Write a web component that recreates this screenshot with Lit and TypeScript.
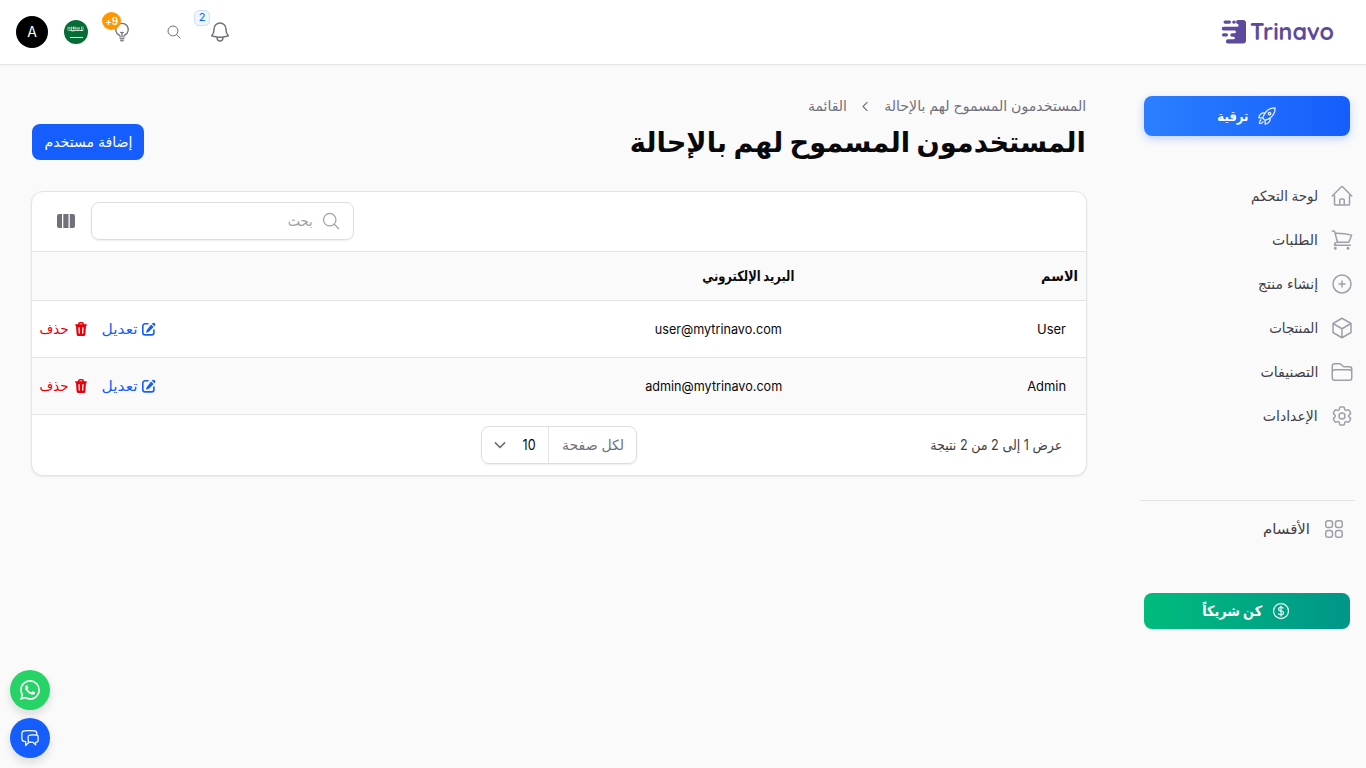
import { LitElement, html, css } from "lit";
import { customElement, property } from "lit/decorators.js";

/** A single line of text condensed or widened to an exact advance width. */
@customElement("fit-text")
class FitText extends LitElement {
  @property({ type: Number }) w = 0;
  static styles = css`
    :host { display: inline-block; white-space: nowrap; direction: rtl; flex: none; }
    .t { display: inline-block; transform-origin: right center; }
  `;
  render() {
    return html`<span class="t"><slot></slot></span>`;
  }
  firstUpdated() {
    this.style.width = this.w + "px";
    const t = this.renderRoot.querySelector(".t") as HTMLElement;
    const fit = () => {
      t.style.transform = "none";
      const n = t.getBoundingClientRect().width;
      if (n) t.style.transform = `scaleX(${this.w / n})`;
    };
    fit();
    document.fonts.ready.then(fit);
  }
}

const line = (d: string, size = 24, sw = 1.5) => html`<svg width=${size} height=${size} viewBox="0 0 24 24" fill="none" stroke="currentColor" stroke-width=${sw} stroke-linecap="round" stroke-linejoin="round"><path d=${d}></path></svg>`;

const I = {
  home: "m2.25 12 8.954-8.955c.44-.439 1.152-.439 1.591 0L21.75 12M4.5 9.75v10.125c0 .621.504 1.125 1.125 1.125H9.75v-4.875c0-.621.504-1.125 1.125-1.125h2.25c.621 0 1.125.504 1.125 1.125V21h4.125c.621 0 1.125-.504 1.125-1.125V9.75M8.25 21h8.25",
  cart: "M2.25 3h1.386c.51 0 .955.343 1.087.835l.383 1.437M7.5 14.25a3 3 0 0 0-3 3h15.75m-12.75-3h11.218c1.121-2.3 2.1-4.684 2.924-7.138a60.114 60.114 0 0 0-16.536-1.84M7.5 14.25 5.106 5.272M6 20.25a.75.75 0 1 1-1.5 0 .75.75 0 0 1 1.5 0Zm12.75 0a.75.75 0 1 1-1.5 0 .75.75 0 0 1 1.5 0Z",
  plus: "M12 9v6m3-3H9m12 0a9 9 0 1 1-18 0 9 9 0 0 1 18 0Z",
  cube: "m21 7.5-9-5.25L3 7.5m18 0-9 5.25m9-5.25v9l-9 5.25M3 7.5l9 5.25M3 7.5v9l9 5.25m0-9v9",
  folder: "M2.25 12.75V12A2.25 2.25 0 0 1 4.5 9.75h15A2.25 2.25 0 0 1 21.75 12v.75m-8.69-6.44-2.12-2.12a1.5 1.5 0 0 0-1.061-.44H4.5A2.25 2.25 0 0 0 2.25 6v12a2.25 2.25 0 0 0 2.25 2.25h15A2.25 2.25 0 0 0 21.75 18V9a2.25 2.25 0 0 0-2.25-2.25h-5.379a1.5 1.5 0 0 1-1.06-.44Z",
  cog: "M9.594 3.94c.09-.542.56-.94 1.11-.94h2.593c.55 0 1.02.398 1.11.94l.213 1.281c.063.374.313.686.645.87.074.04.147.083.22.127.325.196.72.257 1.075.124l1.217-.456a1.125 1.125 0 0 1 1.37.49l1.296 2.247a1.125 1.125 0 0 1-.26 1.431l-1.003.827c-.293.241-.438.613-.43.992a7.723 7.723 0 0 1 0 .255c-.008.378.137.75.43.991l1.004.827c.424.35.534.955.26 1.43l-1.298 2.247a1.125 1.125 0 0 1-1.369.491l-1.217-.456c-.355-.133-.75-.072-1.076.124a6.47 6.47 0 0 1-.22.128c-.331.183-.581.495-.644.869l-.213 1.281c-.09.543-.56.94-1.11.94h-2.594c-.55 0-1.019-.398-1.11-.94l-.213-1.281c-.062-.374-.312-.686-.644-.87a6.52 6.52 0 0 1-.22-.127c-.325-.196-.72-.257-1.076-.124l-1.217.456a1.125 1.125 0 0 1-1.369-.49l-1.297-2.247a1.125 1.125 0 0 1 .26-1.431l1.004-.827c.292-.24.437-.613.43-.991a6.932 6.932 0 0 1 0-.255c.007-.38-.138-.751-.43-.992l-1.004-.827a1.125 1.125 0 0 1-.26-1.43l1.297-2.247a1.125 1.125 0 0 1 1.37-.491l1.216.456c.356.133.751.072 1.076-.124.072-.044.146-.086.22-.128.332-.183.582-.495.644-.869l.214-1.28ZM15 12a3 3 0 1 1-6 0 3 3 0 0 1 6 0Z",
  grid: "M3.75 6A2.25 2.25 0 0 1 6 3.75h2.25A2.25 2.25 0 0 1 10.5 6v2.25a2.25 2.25 0 0 1-2.25 2.25H6a2.25 2.25 0 0 1-2.25-2.25V6ZM3.75 15.75A2.25 2.25 0 0 1 6 13.5h2.25a2.25 2.25 0 0 1 2.25 2.25V18a2.25 2.25 0 0 1-2.25 2.25H6A2.25 2.25 0 0 1 3.75 18v-2.25ZM13.5 6a2.25 2.25 0 0 1 2.25-2.25H18A2.25 2.25 0 0 1 20.25 6v2.25A2.25 2.25 0 0 1 18 10.5h-2.25a2.25 2.25 0 0 1-2.25-2.25V6ZM13.5 15.75a2.25 2.25 0 0 1 2.25-2.25H18a2.25 2.25 0 0 1 2.25 2.25V18A2.25 2.25 0 0 1 18 20.25h-2.25A2.25 2.25 0 0 1 13.5 18v-2.25Z",
  bell: "M14.857 17.082a23.848 23.848 0 0 0 5.454-1.31A8.967 8.967 0 0 1 18 9.75V9A6 6 0 0 0 6 9v.75a8.967 8.967 0 0 1-2.312 6.022c1.733.64 3.56 1.085 5.455 1.31m5.714 0a24.255 24.255 0 0 1-5.714 0m5.714 0a3 3 0 1 1-5.714 0",
  bulb: "M12 18v-5.25m0 0a6.01 6.01 0 0 0 1.5-.189m-1.5.189a6.01 6.01 0 0 1-1.5-.189m3.75 7.478a12.06 12.06 0 0 1-4.5 0m3.75 2.383a14.406 14.406 0 0 1-3 0M14.25 18v-.192c0-.983.658-1.823 1.508-2.316a7.5 7.5 0 1 0-7.517 0c.85.493 1.509 1.333 1.509 2.316V18",
  search: "m21 21-5.197-5.197m0 0A7.5 7.5 0 1 0 5.196 5.196a7.5 7.5 0 0 0 10.607 10.607Z",
  rocket: "M15.59 14.37a6 6 0 0 1-5.84 7.38v-4.8m5.84-2.58a14.98 14.98 0 0 0 6.16-12.12A14.98 14.98 0 0 0 9.631 8.41m5.96 5.96a14.926 14.926 0 0 1-5.841 2.58m-.119-8.54a6 6 0 0 0-7.381 5.84h4.8m2.581-5.84a14.927 14.927 0 0 0-2.58 5.84m2.699 2.7c-.103.021-.207.041-.311.06a15.09 15.09 0 0 1-2.448-2.448 14.9 14.9 0 0 1 .06-.312m-2.24 2.39a4.493 4.493 0 0 0-1.757 4.306 4.493 4.493 0 0 0 4.306-1.758M16.5 9a1.5 1.5 0 1 1-3 0 1.5 1.5 0 0 1 3 0Z",
  dollar: "M12 6v12m-3-2.818.879.659c1.171.879 3.07.879 4.242 0 1.172-.879 1.172-2.303 0-3.182C13.536 12.219 12.768 12 12 12c-.725 0-1.45-.22-2.003-.659-1.106-.879-1.106-2.303 0-3.182s2.9-.879 4.006 0l.415.33M21 12a9 9 0 1 1-18 0 9 9 0 0 1 18 0Z",
  chat: "M20.25 8.511c.884.284 1.5 1.128 1.5 2.097v4.286c0 1.136-.847 2.1-1.98 2.193-.34.027-.68.052-1.02.072v3.091l-3-3c-1.354 0-2.694-.055-4.02-.163a2.115 2.115 0 0 1-.825-.242m9.345-8.334a2.126 2.126 0 0 0-.476-.095 48.64 48.64 0 0 0-8.048 0c-1.131.094-1.976 1.057-1.976 2.192v4.286c0 .837.46 1.58 1.155 1.951m9.345-8.334V6.637c0-1.621-1.152-3.026-2.76-3.235A48.455 48.455 0 0 0 11.25 3c-2.115 0-4.198.137-6.24.402-1.608.209-2.76 1.614-2.76 3.235v6.226c0 1.621 1.152 3.026 2.76 3.235.577.075 1.157.14 1.74.194V21l4.155-4.155",
};

const whatsapp = html`<svg width="20" height="20" viewBox="0 0 24 24" fill="#fff"><path d="M17.472 14.382c-.297-.149-1.758-.867-2.03-.967-.273-.099-.471-.148-.67.15-.197.297-.767.966-.94 1.164-.173.199-.347.223-.644.075-.297-.15-1.255-.463-2.39-1.475-.883-.788-1.48-1.761-1.653-2.059-.173-.297-.018-.458.13-.606.134-.133.298-.347.446-.52.149-.174.198-.298.298-.497.099-.198.05-.371-.025-.52-.075-.149-.669-1.612-.916-2.207-.242-.579-.487-.5-.669-.51-.173-.008-.371-.01-.57-.01-.198 0-.52.074-.792.372-.272.297-1.04 1.016-1.04 2.479 0 1.462 1.065 2.875 1.213 3.074.149.198 2.096 3.2 5.077 4.487.709.306 1.262.489 1.694.625.712.227 1.36.195 1.871.118.571-.085 1.758-.719 2.006-1.413.248-.694.248-1.289.173-1.413-.074-.124-.272-.198-.57-.347m-5.421 7.403h-.004a9.87 9.87 0 01-5.031-1.378l-.361-.214-3.741.982.998-3.648-.235-.374a9.86 9.86 0 01-1.51-5.26c.001-5.45 4.436-9.884 9.888-9.884 2.64 0 5.122 1.03 6.988 2.898a9.825 9.825 0 012.893 6.994c-.003 5.45-4.437 9.884-9.885 9.884m8.413-18.297A11.815 11.815 0 0012.05 0C5.495 0 .16 5.335.157 11.892c0 2.096.547 4.142 1.588 5.945L.057 24l6.305-1.654a11.882 11.882 0 005.683 1.448h.005c6.554 0 11.89-5.335 11.893-11.893a11.821 11.821 0 00-3.48-8.413z"></path></svg>`;

const pencil = html`<svg width="16" height="16" viewBox="0 0 16 16" fill="none" stroke="#155dfc" stroke-width="1.6" stroke-linecap="round"><path d="M7 2.8H4A2.200 2.200 0 0 0 1.800 5v6.700A2.200 2.200 0 0 0 4 13.900h6.700a2.200 2.200 0 0 0 2.200-2.200V9"></path><path fill="#155dfc" stroke="none" d="M11.300 2.300a1.750 1.750 0 0 1 2.500 2.500l-.5.500-2.500-2.500zM10.100 3.500l2.500 2.500-4.200 4.200a3 3 0 0 1-1.300.8l-2.200.7.700-2.200a3 3 0 0 1 .8-1.300z"></path></svg>`;

const trash = html`<svg width="16" height="16" viewBox="0 0 16 16" fill="#e7000b" fill-rule="evenodd"><path d="M5 3.250V3a2 2 0 0 1 2-2h2a2 2 0 0 1 2 2v.25h2.250a.75.750 0 0 1 0 1.500H13l-.6 8.400A2 2 0 0 1 10.400 15H5.600a2 2 0 0 1-2-1.850L3 4.750h-.250a.75.750 0 0 1 0-1.500zM7 2.500a.5.500 0 0 0-.5.500v.25h3V3a.5.500 0 0 0-.5-.500zM6 6a.6.600 0 0 0-.6.650l.3 5.500a.6.600 0 0 0 1.250-.050L6.700 6.600A.6.600 0 0 0 6 6zm4 0a.6.600 0 0 0-.7.600l-.25 5.500a.6.600 0 0 0 1.250.050l.3-5.500A.6.600 0 0 0 10 6z"></path></svg>`;

const nav: [string, string, number][] = [
  [I.home, "لوحة التحكم", 67],
  [I.cart, "الطلبات", 46],
  [I.plus, "إنشاء منتج", 60],
  [I.cube, "المنتجات", 49],
  [I.folder, "التصنيفات", 58],
  [I.cog, "الإعدادات", 55],
];

const rows: [string, number, string, number][] = [
  ["User", 29, "user@mytrinavo.com", 127],
  ["Admin", 39, "admin@mytrinavo.com", 137],
];

@customElement("app-root")
class AppRoot extends LitElement {
  static styles = css`
    * { box-sizing: border-box; }
    :host { display: block; position: relative; width: 1366px; height: 768px; overflow: hidden; background: #fafafa; direction: rtl; color: #09090b; font: 14px/20px Inter, "DejaVu Sans", sans-serif; }
    svg { display: block; flex: none; }
    header { height: 65px; background: #fff; border-bottom: 1px solid #e4e4e7; box-shadow: 0 1px 2px #0000000a; display: flex; align-items: center; justify-content: space-between; padding: 0 32px 1px 16px; }
    .brand { font: 700 23px Quicksand, Lato, sans-serif; fill: #5d4a9e; }
    .tools { display: flex; align-items: center; color: #71717b; direction: ltr; }
    .avatar { width: 32px; height: 32px; border-radius: 50%; background: #000; color: #fff; display: flex; align-items: center; justify-content: center; font-size: 14px; margin-right: 16px; }
    .tool { position: relative; }
    .bulb { margin-left: 24px; }
    .find { margin-left: 34px; }
    .bell { margin-left: 26px; }
    .badge { position: absolute; display: flex; align-items: center; justify-content: center; line-height: 1; }
    .nine { left: -10px; top: -10px; width: 19px; height: 18px; border-radius: 50%; background: #ff9800; color: #fff; font-weight: 600; font-size: 10px; letter-spacing: -.4px; }
    .two { left: -14px; top: -10px; width: 16px; height: 16px; border-radius: 5px; background: #eff6ff; border: 1px solid #cddffc; color: #155dfc; font-size: 11px; }
    .body { display: flex; height: 703px; }
    aside { width: 248px; padding: 31px 16px 0 16px; }
    .cta { width: 206px; height: 40px; border-radius: 8px; display: flex; align-items: center; justify-content: center; gap: 9px; color: #fff; font-weight: 700; }
    .up { background: linear-gradient(to right, #2b7fff, #155dfc); box-shadow: 0 3px 8px #155dfc40; }
    .up svg, .partner svg { opacity: .9; }
    .partner { height: 36px; background: linear-gradient(to right, #00bc7d, #009689); margin-top: 42px; padding-right: 1px; }
    nav { margin: 38px -4px 0 0; }
    .item { height: 44px; display: flex; align-items: center; gap: 12px; color: #3f3f46; }
    .item svg { color: #9f9fa9; }
    .group { border-top: 1px solid #e4e4e7; width: 215px; margin: 62px -5px 0 0; padding: 6px 9px 0 0; }
    main { width: 1054px; margin-right: 32px; padding-top: 31px; }
    .crumbs { display: flex; align-items: center; height: 20px; color: #71717b; gap: 11px; }
    .title { display: flex; justify-content: space-between; align-items: center; height: 36px; margin-top: 8px; }
    h1 { margin: 0; font-size: 28px; line-height: 36px; font-weight: 700; }
    .add { width: 112px; height: 36px; border-radius: 8px; background: #155dfc; color: #fff; display: flex; align-items: center; justify-content: center; }
    .card { margin: 31px -1px 0; width: 1056px; height: 285px; background: #fff; border: 1px solid #e4e4e7; border-radius: 12px; box-shadow: 0 1px 2px #00000014; overflow: hidden; }
    .toolbar { height: 59px; display: flex; direction: ltr; align-items: center; padding: 0 0 2px 24px; gap: 15px; }
    .field { direction: rtl; width: 263px; height: 38px; border: 1px solid #dedee1; border-radius: 8px; box-shadow: 0 1px 2px #00000012; display: flex; align-items: center; gap: 8px; padding: 0 12px; color: #9f9fa9; }
    .row { display: grid; grid-template-columns: 304px 1fr 132px; height: 57px; border-top: 1px solid #e4e4e7; align-items: center; }
    .row.head { background: #fafafa; height: 49px; font-weight: 700; grid-template-columns: 284px 1fr; padding-right: 8px; }
    .row.alt { background: #fafafa; }
    .latin { font-size: 13px; }
    .name { padding-right: 20px; }
    .actions { display: flex; width: 132px; align-items: center; justify-content: flex-end; padding-left: 8px; }
    .edit { color: #155dfc; margin-right: 4px; }
    .del { color: #e7000b; margin-right: 4px; }
    .trash { margin-right: 12px; }
    .foot { display: flex; align-items: center; height: 60px; border-top: 1px solid #e4e4e7; padding-right: 24px; color: #3f3f46; }
    .per { display: flex; align-items: center; width: 156px; height: 38px; margin-right: 293px; border: 1px solid #dedee1; border-radius: 8px; box-shadow: 0 1px 2px #00000012; color: #71717b; }
    .lbl { height: 36px; width: 88px; flex: none; display: flex; align-items: center; padding-right: 12px; border-left: 1px solid #e4e4e7; }
    .num { color: #09090b; margin: 0 12px 0 13px; }
    .fab { position: absolute; left: 10px; width: 40px; height: 40px; border-radius: 50%; display: flex; align-items: center; justify-content: center; color: #fff; box-shadow: 0 5px 10px #0000001f; }
    .wa { top: 670px; background: #25d366; }
    .ch { top: 718px; background: #155dfc; }
  `;

  render() {
    return html`
      <header>
        <svg width="114" height="32" viewBox="0 0 114 32">
          <g fill="#5d4a9e"><path d="M18 4h5a3 3 0 0 1 3 3v17.500a3 3 0 0 1-3 3H8a2.100 2.100 0 0 1 0-4.200h5.500a1.300 1.300 0 0 0 0-2.600H12a1.700 1.700 0 0 1 0-3.400h2.500a1.400 1.400 0 0 0 0-2.800H3.600a1.900 1.900 0 0 1 0-3.800H17a1.300 1.300 0 0 0 .5-2.600 2.100 2.100 0 0 1 .5-4.100z"></path>
          <rect x="3.500" y="4.500" width="7.500" height="3.200" rx="1.600"></rect><rect x="12.200" y="4.500" width="3.600" height="3.200" rx="1.600"></rect><rect x="2" y="17.300" width="6" height="3.200" rx="1.600"></rect></g>
          <text class="brand" direction="ltr" x="30" y="24" textLength="84" lengthAdjust="spacingAndGlyphs">Trinavo</text>
        </svg>
        <div class="tools">
          <div class="avatar">A</div>
          <svg width="24" height="24" viewBox="0 0 24 24"><circle cx="12" cy="12" r="12" fill="#046c35"></circle><path d="M4 6.500v4.500m2-4v3m1.500-3.500v4.500h3M11 6.500v4.500m2-3v2.500h2V7.500m1 3h3V6.500M4.500 8h2M8 8h8m-11 2.500h14M17.500 6.500v4.500M9.500 6.500v3" stroke="#fff" stroke-width=".8" opacity=".75" fill="none"></path><path d="M6 17.500h13" stroke="#fff" stroke-width=".9"></path></svg>
          <div class="tool bulb">${line(I.bulb, 20)}<span class="badge nine">+9</span></div>
          <div class="find">${line(I.search, 16)}</div>
          <div class="tool bell">${line(I.bell, 24)}<span class="badge two">2</span></div>
        </div>
      </header>
      <div class="body">
        <aside>
          <div class="cta up">${line(I.rocket, 20)}<fit-text w="31">ترقية</fit-text></div>
          <nav>${nav.map(([d, t, w]) => html`<div class="item">${line(d)}<fit-text w=${w}>${t}</fit-text></div>`)}</nav>
          <div class="group"><div class="item">${line(I.grid)}<fit-text w="47">الأقسام</fit-text></div></div>
          <div class="cta partner">${line(I.dollar, 20)}<fit-text w="60">كن شريكاً</fit-text></div>
        </aside>
        <main>
          <div class="crumbs"><fit-text w="202">المستخدمون المسموح لهم بالإحالة</fit-text>${line("M14.500 18.500 8 12l6.500-6.500", 15, 1.8)}<fit-text w="39">القائمة</fit-text></div>
          <div class="title"><h1><fit-text w="456">المستخدمون المسموح لهم بالإحالة</fit-text></h1><div class="add"><fit-text w="88">إضافة مستخدم</fit-text></div></div>
          <section class="card">
            <div class="toolbar">
              <svg width="20" height="20" viewBox="0 0 20 20" fill="#71717b"><path d="M6 3v14H3a2 2 0 0 1-2-2V5a2 2 0 0 1 2-2zM7.300 3h5.200v14H7.300zM13.800 3H17a2 2 0 0 1 2 2v10a2 2 0 0 1-2 2h-3.200z"></path></svg>
              <div class="field">${line(I.search, 20)}<fit-text w="25">بحث</fit-text></div>
            </div>
            <div class="row head"><div><fit-text w="37">الاسم</fit-text></div><div><fit-text w="92">البريد الإلكتروني</fit-text></div></div>
            ${rows.map(([n, nw, m, mw], i) => html`<div class="row ${i ? "alt" : ""}">
              <div class="name latin"><fit-text w=${nw}>${n}</fit-text></div><div class="latin"><fit-text w=${mw}>${m}</fit-text></div>
              <div class="actions">${pencil}<span class="edit"><fit-text w="36">تعديل</fit-text></span><span class="trash">${trash}</span><span class="del"><fit-text w="29">حذف</fit-text></span></div>
            </div>`)}
            <div class="foot"><fit-text w="132">عرض 1 إلى 2 من 2 نتيجة</fit-text>
              <div class="per"><div class="lbl"><fit-text w="62">لكل صفحة</fit-text></div><span class="num"><fit-text w="13">10</fit-text></span>${line("M6.500 9.500 12 15l5.500-5.500", 20, 2)}</div>
            </div>
          </section>
        </main>
      </div>
      <div class="fab wa">${whatsapp}</div>
      <div class="fab ch">${line(I.chat, 20)}</div>
    `;
  }
}
